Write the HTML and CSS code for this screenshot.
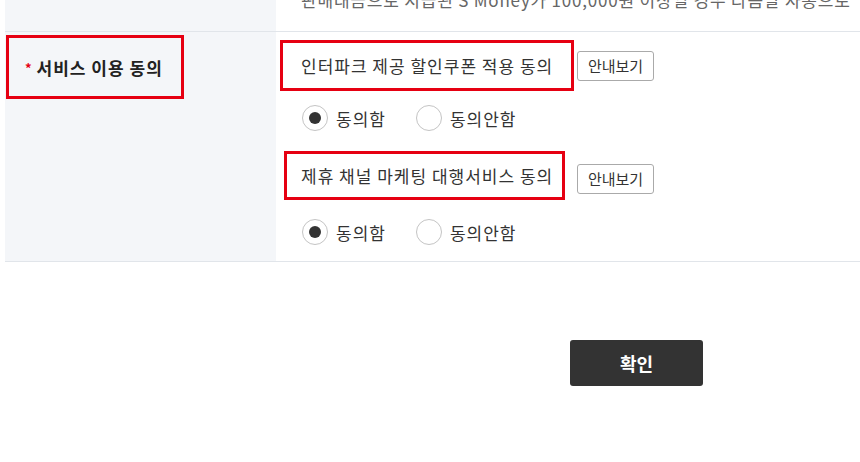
FILE: index.html
```html
<!DOCTYPE html>
<html>
	<head>
		<meta charset="utf-8">
		<title>서비스 이용 동의</title>
		<link rel="stylesheet" href="styles.css">
	</head>
	<body>
		<div class="formTable">
			<div class="formRow firstRow">
				<div class="formHead"></div>
				<div class="formBody">
					<p class="note">판매대금으로 지급된 S Money가 100,000원 이상일 경우 다음날 자동으로</p>
				</div>
			</div>
			<div class="formRow">
				<div class="formHead">
					<div class="mark headMark"><span class="req">*</span> 서비스 이용 동의</div>
				</div>
				<div class="formBody agreeBody">
					<div class="agreeItem">
						<div class="agreeTitle">
							<div class="mark titleMark1">인터파크 제공 할인쿠폰 적용 동의</div>
							<button class="guideBtn guideBtn1">안내보기</button>
						</div>
						<div class="radios">
							<label class="radio checked"><span class="dot"></span>동의함</label>
							<label class="radio"><span class="dot"></span>동의안함</label>
						</div>
					</div>
					<div class="agreeItem">
						<div class="agreeTitle">
							<div class="mark titleMark2">제휴 채널 마케팅 대행서비스 동의</div>
							<button class="guideBtn guideBtn2">안내보기</button>
						</div>
						<div class="radios">
							<label class="radio checked"><span class="dot"></span>동의함</label>
							<label class="radio"><span class="dot"></span>동의안함</label>
						</div>
					</div>
				</div>
			</div>
		</div>

		<div class="actions">
			<button class="confirmBtn">확인</button>
		</div>
	</body>
</html>
```

FILE: styles.css
```css
html, body {
	margin: 0;
	overflow: hidden;
}

body {
	font-family: "Noto Sans CJK KR", "Noto Sans", sans-serif;
	color: #333;
	background: #fff;
}

.formTable {
	margin: -11px 0 0 5px;
}

.formRow {
	display: flex;
	border-bottom: 1px solid #e1e5ea;
}

.formHead {
	width: 271px;
	flex-shrink: 0;
	background-color: #f4f6f9;
}

.formBody {
	flex: 1;
	min-width: 0;
}

.firstRow .formBody {
	padding: 0 0 20px 25px;
}

.note {
	margin: 0;
	font-size: 17px;
	letter-spacing: 0.8px;
	line-height: 22px;
	color: #666;
	white-space: nowrap;
}

.mark {
	box-sizing: border-box;
	border: 3px solid #e60012;
	display: flex;
	align-items: center;
}

.headMark {
	margin: 3px 0 0 1px;
	width: 178px;
	height: 64px;
	padding-left: 16px;
	font-size: 17px;
	letter-spacing: 1px;
	font-weight: bold;
	color: #222;
}

.req {
	color: #e60012;
	font-size: 13px;
	margin-right: 4px;
}

.agreeBody {
	padding: 8px 0 16px 4px;
}

.agreeTitle {
	display: flex;
	align-items: center;
}

.titleMark1 {
	height: 51px;
	width: 294px;
	padding-left: 18px;
	font-size: 17px;
	letter-spacing: 1px;
}

.titleMark2 {
	height: 49px;
	width: 281px;
	margin-left: 4px;
	padding-left: 14px;
	font-size: 17px;
	letter-spacing: 1px;
}

.guideBtn {
	font-family: inherit;
	font-size: 15px;
	color: #333;
	background: #fff;
	border: 1px solid #aaa;
	border-radius: 3px;
	height: 30px;
	width: 77px;
	padding: 0;
}

.guideBtn1 { margin-left: 3px; }
.guideBtn2 { margin-left: 12px; margin-top: 6px; }

.radios {
	display: flex;
	align-items: center;
	margin: 14px 0 20px 22px;
	height: 26px;
}

.agreeItem:last-child .radios {
	margin-top: 19px;
	margin-bottom: 0;
}

.radio {
	display: flex;
	align-items: center;
	font-size: 17px;
	letter-spacing: 1px;
	margin-right: 30px;
}

.dot {
	box-sizing: border-box;
	width: 26px;
	height: 26px;
	border: 1px solid #c4c4c4;
	border-radius: 50%;
	margin-right: 8px;
	display: flex;
	align-items: center;
	justify-content: center;
}

.radio.checked .dot::after {
	content: "";
	width: 12px;
	height: 12px;
	border-radius: 50%;
	background: #333;
}

.actions {
	padding: 78px 0 0 570px;
}

.confirmBtn {
	width: 133px;
	height: 46px;
	border: none;
	border-radius: 3px;
	background: #333;
	color: #fff;
	font-family: inherit;
	font-size: 18px;
	font-weight: bold;
}
```
